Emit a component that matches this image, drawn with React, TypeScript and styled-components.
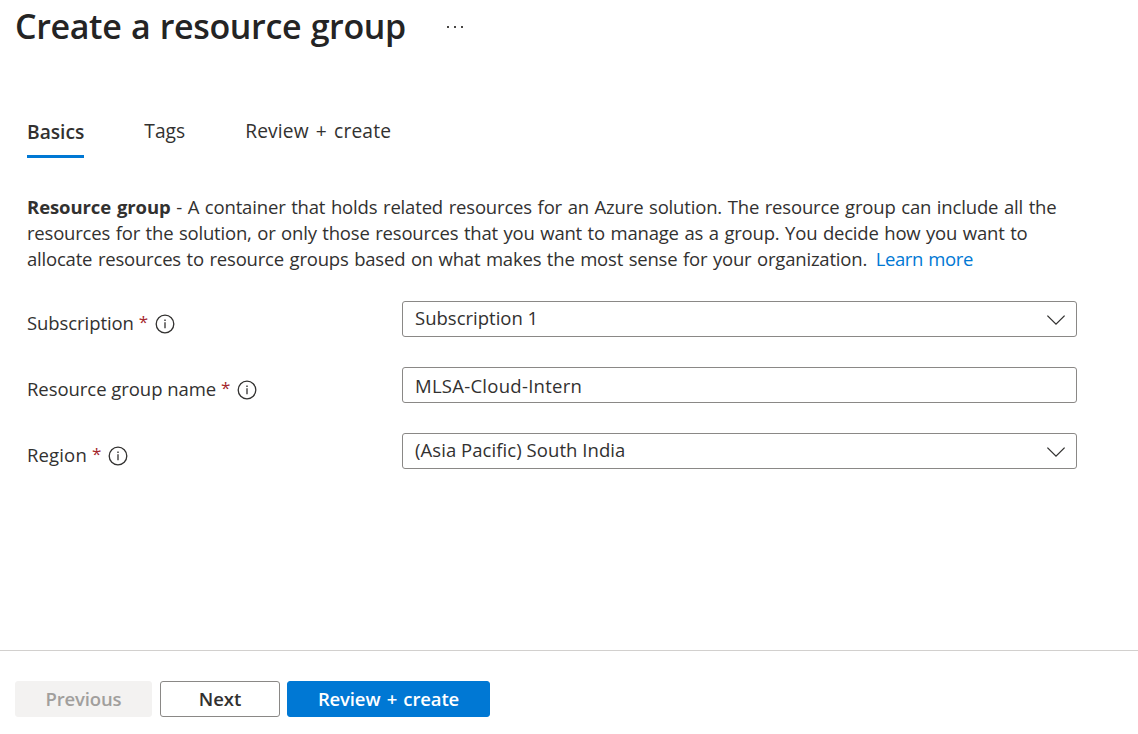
import React from "react";
import styled, { createGlobalStyle } from "styled-components";

const GlobalStyle = createGlobalStyle`
  * { box-sizing: border-box; }
  body {
    margin: 0;
    background: #fff;
    color: #323130;
    font-family: "Open Sans", "Noto Sans", sans-serif;
    font-size: 18.5px;
    line-height: 26px;
  }
`;

const Page = styled.div`
  display: flex;
  flex-direction: column;
  height: 734px;
  overflow: hidden;
`;

const Header = styled.header`
  display: flex;
  align-items: center;
  gap: 41px;
  height: 54px;
  padding-left: 15px;
`;

const Title = styled.h1`
  margin: 0;
  padding-bottom: 2px;
  font-size: 34px;
  line-height: 52px;
  font-weight: 600;
  letter-spacing: -0.36px;
  word-spacing: 1px;
  color: #242424;
  white-space: nowrap;
`;

const Tracked = styled.span<{ $spacing: number }>`
  letter-spacing: ${(p) => p.$spacing}px;
  white-space: nowrap;
`;

const Content = styled.main`
  flex: 1;
  padding: 64px 27px 0;
`;

const Tabs = styled.nav`
  display: flex;
  gap: 60px;
  height: 40px;
`;

const Tab = styled.a<{ $active?: boolean }>`
  height: 40px;
  border-bottom: 3px solid ${(p) => (p.$active ? "#0078d4" : "transparent")};
  font-size: 19.2px;
  line-height: ${(p) => (p.$active ? 27 : 25)}px;
  font-weight: ${(p) => (p.$active ? 600 : 400)};
  word-spacing: 2px;
  white-space: nowrap;
`;

const Description = styled.p`
  margin: 36px 0 29px;
`;

const Line = styled.span<{ $spacing: number }>`
  display: block;
  letter-spacing: ${(p) => p.$spacing}px;
  word-spacing: 1px;
  white-space: nowrap;
`;

const Lead = styled.b`
  letter-spacing: -0.08px;
`;

const Link = styled.a`
  margin-left: 3px;
  letter-spacing: -0.4px;
  color: #0078d4;
`;

const Form = styled.div`
  display: flex;
  flex-direction: column;
  gap: 30px;
`;

const Row = styled.div`
  display: grid;
  grid-template-columns: 375px 675px;
  height: 36px;
`;

const Label = styled.label`
  display: flex;
  align-items: center;
  height: 36px;
  padding-top: 8px;
  white-space: nowrap;

  svg {
    margin-top: 1px;
  }
`;

const Required = styled.span`
  margin: 0 6px 0 5px;
  padding-bottom: 3px;
  font-size: 17px;
  line-height: 24px;
  width: 10px;
  color: #a4262c;
`;

const Field = styled.div<{ $select?: boolean }>`
  display: flex;
  align-items: center;
  justify-content: space-between;
  padding: ${(p) => (p.$select ? "0 10px 2px 12px" : "2px 10px 0 12px")};
  border: 1px solid #8a8886;
  border-radius: 3px;

  svg {
    margin-top: 4px;
  }
`;

const Footer = styled.footer`
  display: flex;
  height: 84px;
  padding: 30px 15px 0;
  border-top: 1px solid #d2d0ce;
`;

const Button = styled.button<{ $kind: "disabled" | "plain" | "primary"; $width: number }>`
  width: ${(p) => p.$width}px;
  height: 36px;
  margin-right: ${(p) => (p.$kind === "disabled" ? 8 : 7)}px;
  padding: 0;
  border: 1px solid
    ${(p) => ({ disabled: "#f3f2f1", plain: "#8a8886", primary: "#0078d4" })[p.$kind]};
  border-radius: 3px;
  background: ${(p) => ({ disabled: "#f3f2f1", plain: "#fff", primary: "#0078d4" })[p.$kind]};
  color: ${(p) => ({ disabled: "#a19f9d", plain: "#323130", primary: "#fff" })[p.$kind]};
  font: 600 18.5px/34px "Open Sans", "Noto Sans", sans-serif;
  word-spacing: 1.6px;
`;

const InfoIcon = () => (
  <svg width="20" height="20" viewBox="0 0 20 20" fill="none" stroke="#323130">
    <circle cx="10" cy="10" r="8.8" strokeWidth="1.3" />
    <path d="M10 8.3v6" strokeWidth="1.3" />
    <path d="M10 5.5v1.4" strokeWidth="1.4" />
  </svg>
);

const Chevron = () => (
  <svg width="20" height="12" viewBox="0 0 20 12" fill="none" stroke="#323130" strokeWidth="1.3">
    <path d="M1.4 1.6 10 10.2l8.6-8.6" />
  </svg>
);

const Dots = () => (
  <svg width="18" height="4" viewBox="0 0 18 4" fill="#484644">
    <rect x="0" y="1" width="2" height="2" />
    <rect x="7" y="1" width="2" height="2" />
    <rect x="14" y="1" width="2" height="2" />
  </svg>
);

const fields = [
  { label: "Subscription", spacing: -0.08, value: "Subscription 1", valueSpacing: 0, select: true },
  { label: "Resource group name", spacing: -0.05, value: "MLSA-Cloud-Intern", valueSpacing: 0.27, select: false },
  { label: "Region", spacing: 0.15, value: "(Asia Pacific) South India", valueSpacing: 0.06, select: true },
];

export default function App() {
  return (
    <Page>
      <GlobalStyle />
      <Header>
        <Title>Create a resource group</Title>
        <Dots />
      </Header>
      <Content>
        <Tabs>
          <Tab $active><Tracked $spacing={0}>Basics</Tracked></Tab>
          <Tab><Tracked $spacing={0}>Tags</Tracked></Tab>
          <Tab><Tracked $spacing={0.15}>Review + create</Tracked></Tab>
        </Tabs>
        <Description>
          <Line $spacing={-0.17}>
            <Lead>Resource group</Lead> - A container that holds related resources for an Azure solution. The resource group can include all the
          </Line>
          <Line $spacing={-0.2}>
            resources for the solution, or only those resources that you want to manage as a group. You decide how you want to
          </Line>
          <Line $spacing={-0.2}>
            allocate resources to resource groups based on what makes the most sense for your organization. <Link>Learn more</Link>
          </Line>
        </Description>
        <Form>
          {fields.map((f) => (
            <Row key={f.label}>
              <Label>
                <Tracked $spacing={f.spacing}>{f.label}</Tracked>
                <Required>*</Required>
                <InfoIcon />
              </Label>
              <Field $select={f.select}>
                <Tracked $spacing={f.valueSpacing}>{f.value}</Tracked>
                {f.select && <Chevron />}
              </Field>
            </Row>
          ))}
        </Form>
      </Content>
      <Footer>
        <Button $kind="disabled" $width={137} disabled><Tracked $spacing={-0.15}>Previous</Tracked></Button>
        <Button $kind="plain" $width={120}><Tracked $spacing={0}>Next</Tracked></Button>
        <Button $kind="primary" $width={203}><Tracked $spacing={-0.13}>Review + create</Tracked></Button>
      </Footer>
    </Page>
  );
}
